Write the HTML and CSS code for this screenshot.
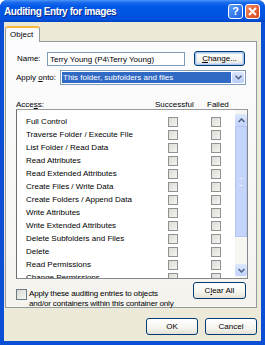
FILE: index.html
```html
<!DOCTYPE html>
<html lang="en">
  <head>
    <meta charset="UTF-8" />
    <title>Auditing Entry for images</title>
    <link rel="stylesheet" href="styles.css">
  </head>
  <body>
    <div class="window">
      <div class="titlebar">
        <span class="title">Auditing Entry for images</span>
        <span class="caption-btn help">?</span>
        <span class="caption-btn close">
          <svg width="9" height="9" viewBox="0 0 9 9"><path d="M1 1 L8 8 M8 1 L1 8" stroke="#fff" stroke-width="1.8" /></svg>
        </span>
      </div>
      <div class="body">
        <div class="tabs">
          <div class="tab active">Object</div>
        </div>
        <div class="panel">
          <div class="field-row">
            <label class="name-label">Name:</label>
            <div class="textbox">Terry Young (P4\Terry Young)</div>
            <button class="btn change-btn focused"><u>C</u>hange...</button>
          </div>
          <div class="field-row">
            <label class="apply-label">Apply <u>o</u>nto:</label>
            <div class="select">
              <span class="select-value">This folder, subfolders and files</span>
              <span class="select-arrow">
                <svg width="7" height="5" viewBox="0 0 7 5"><path d="M0.5 0.8 L3.5 3.8 L6.5 0.8" fill="none" stroke="#4d6185" stroke-width="1.5" /></svg>
              </span>
            </div>
          </div>
          <div class="access-head">
            <span class="access-label">Acce<u>s</u>s:</span>
            <span class="col-success">Successful</span>
            <span class="col-failed">Failed</span>
          </div>
          <div class="listbox">
            <ul id="entries" class="entries"></ul>
            <div class="scrollbar">
              <div class="sb-btn">
                <svg width="7" height="5" viewBox="0 0 7 5"><path d="M0.5 4 L3.5 1 L6.5 4" fill="none" stroke="#4d6185" stroke-width="1.5" /></svg>
              </div>
              <div class="sb-thumb"><span class="grip"></span></div>
              <div class="sb-track"></div>
              <div class="sb-btn">
                <svg width="7" height="5" viewBox="0 0 7 5"><path d="M0.5 1 L3.5 4 L6.5 1" fill="none" stroke="#4d6185" stroke-width="1.5" /></svg>
              </div>
            </div>
          </div>
          <div class="bottom-row">
            <span class="checkbox apply-check"></span>
            <span class="apply-text">Apply these auditing entries to objects<br>and/or containers within this container only</span>
            <button class="btn clear-btn">C<u>l</u>ear All</button>
          </div>
        </div>
        <div class="dialog-buttons">
          <button class="btn">OK</button>
          <button class="btn">Cancel</button>
        </div>
      </div>
    </div>
    <script>
      const entries = [
        "Full Control",
        "Traverse Folder / Execute File",
        "List Folder / Read Data",
        "Read Attributes",
        "Read Extended Attributes",
        "Create Files / Write Data",
        "Create Folders / Append Data",
        "Write Attributes",
        "Write Extended Attributes",
        "Delete Subfolders and Files",
        "Delete",
        "Read Permissions",
        "Change Permissions",
      ];
      const list = document.getElementById("entries");
      entries.forEach((name) => {
        const item = document.createElement("li");
        item.className = "entry";
        const label = document.createElement("span");
        label.className = "entry-name";
        label.textContent = name;
        item.appendChild(label);
        // one box for Successful, one for Failed
        for (let i = 0; i < 2; i++) {
          const box = document.createElement("span");
          box.className = "checkbox";
          item.appendChild(box);
        }
        list.appendChild(item);
      });
    </script>
  </body>
</html>
```

FILE: styles.css
```css
body {
  margin: 0;
  background: #fff;
  font-family: "Liberation Sans", Arial, sans-serif;
  font-size: 8px;
  color: #000;
}
.window {
  width: 265px;
  height: 345px;
  box-sizing: border-box;
  background: #0a4fd6;
  border-radius: 7px 7px 0 0;
  display: flex;
  flex-direction: column;
  overflow: hidden;
}
.titlebar {
  height: 22px;
  flex-shrink: 0;
  display: flex;
  align-items: center;
  padding: 0 5px 0 4px;
  background: linear-gradient(#4a95f8 0%, #1a69ec 12%, #0058e6 30%, #0054e3 70%, #0050dc 90%, #0042bc 100%);
}
.title {
  flex: 1;
  color: #fff;
  font-weight: bold;
  font-size: 10px;
  letter-spacing: -0.4px;
  text-shadow: 1px 1px 0 #0a2a8a;
}
.caption-btn {
  width: 13px;
  height: 13px;
  border: 1px solid #fff;
  border-radius: 3px;
  display: flex;
  align-items: center;
  justify-content: center;
  color: #fff;
  font-weight: bold;
  font-size: 11px;
  margin-left: 2px;
}
.help {
  background: linear-gradient(135deg, #5a9cf8, #1d62e0);
}
.close {
  background: linear-gradient(135deg, #f0895f, #d8471f);
}
.body {
  flex: 1;
  margin: 0 4px 4px 4px;
  background: #ece9d8;
  display: flex;
  flex-direction: column;
  padding: 4px 4px 0 1px;
}
.tabs {
  display: flex;
  height: 15px;
}
.tab {
  width: 35px;
  box-sizing: border-box;
  border: 1px solid #919b9c;
  border-bottom: none;
  border-top: 2px solid #f7b73c;
  border-radius: 3px 3px 0 0;
  background: #fcfcfe;
  padding: 2px 0 0 4px;
  position: relative;
  z-index: 1;
  height: 16px;
}
.panel {
  height: 267px;
  box-sizing: border-box;
  border: 1px solid #919b9c;
  background: linear-gradient(#fcfcfe, #f4f3ee);
  padding: 9px 10px 0 10px;
  display: flex;
  flex-direction: column;
}
.field-row {
  display: flex;
  align-items: center;
  height: 15px;
  margin-bottom: 4px;
}
.name-label {
  width: 30px;
  padding-left: 1px;
}
.apply-label {
  width: 44px;
}
.textbox {
  width: 138px;
  height: 14px;
  box-sizing: border-box;
  border: 1px solid #7f9db9;
  background: #fff;
  padding: 2px 0 0 2px;
  margin-right: 9px;
}
.btn {
  font-family: inherit;
  font-size: 8px;
  height: 17px;
  width: 52px;
  box-sizing: border-box;
  border: 1px solid #003c74;
  border-radius: 3px;
  background: linear-gradient(#ffffff 0%, #f5f4ee 60%, #e3e1d6 100%);
  padding: 0;
  color: #000;
}
.change-btn {
  width: 51px;
  height: 15px;
  box-shadow: inset 0 0 0 1px #a8c6f0, inset 0 0 0 2px #cde0f8;
}
.select {
  width: 186px;
  height: 15px;
  box-sizing: border-box;
  border: 1px solid #7f9db9;
  background: #fff;
  display: flex;
  padding: 1px;
}
.select-value {
  flex: 1;
  background: #316ac5;
  color: #fff;
  padding: 1px 0 0 1px;
}
.select-arrow {
  width: 12px;
  margin-left: 1px;
  background: linear-gradient(#d9e5fd, #b9cdf7);
  border-radius: 2px;
  display: flex;
  align-items: center;
  justify-content: center;
}
.access-head {
  display: flex;
  height: 11px;
  margin-top: 11px;
  align-items: center;
}
.access-label {
  width: 139px;
}
.col-success {
  width: 52px;
}
.listbox {
  height: 170px;
  width: 232px;
  box-sizing: border-box;
  border: 1px solid #828790;
  border-left-color: #6f6f6f;
  border-top-color: #9a9a9a;
  background: #fff;
  display: flex;
}
.entries {
  list-style: none;
  margin: 0;
  padding: 5px 0 0 0;
  flex: 1;
  overflow: hidden;
}
.entry {
  display: flex;
  align-items: center;
  height: 13px;
  padding-left: 9px;
}
.entry-name {
  width: 142px;
  flex-shrink: 0;
  white-space: nowrap;
}
.checkbox {
  display: block;
  flex-shrink: 0;
  width: 10px;
  height: 10px;
  box-sizing: border-box;
  border: 1px solid #8e9290;
  background: linear-gradient(135deg, #dcdcd6, #f4f4f0);
}
.entry .checkbox + .checkbox {
  margin-left: 33px;
}
.scrollbar {
  width: 12px;
  flex-shrink: 0;
  display: flex;
  flex-direction: column;
  padding: 4px 0 2px 0;
  background: #f7f6f1;
}
.sb-btn {
  height: 12px;
  background: linear-gradient(#dde7fd, #c2d3fb);
  border-radius: 2px;
  display: flex;
  align-items: center;
  justify-content: center;
}
.sb-thumb {
  height: 111px;
  background: #c4d4fb;
  border: 1px solid #b2c6f4;
  box-sizing: border-box;
  display: flex;
  align-items: center;
  justify-content: center;
}
.grip {
  width: 4px;
  height: 6px;
  border-top: 1px solid #e6edfe;
  border-bottom: 1px solid #e6edfe;
}
.sb-track {
  flex: 1;
}
.bottom-row {
  display: flex;
  align-items: flex-start;
  margin-top: 3px;
}
.apply-check {
  margin-top: 7px;
  width: 11px;
  height: 11px;
  border-color: #6c7a86;
}
.apply-text {
  flex-shrink: 0;
  margin-top: 7px;
  padding-left: 2px;
  line-height: 10px;
  letter-spacing: -0.15px;
  white-space: nowrap;
}
.clear-btn {
  width: 53px;
  margin-left: auto;
}
.dialog-buttons {
  display: flex;
  justify-content: flex-end;
  gap: 7px;
  margin-top: 10px;
}
```
